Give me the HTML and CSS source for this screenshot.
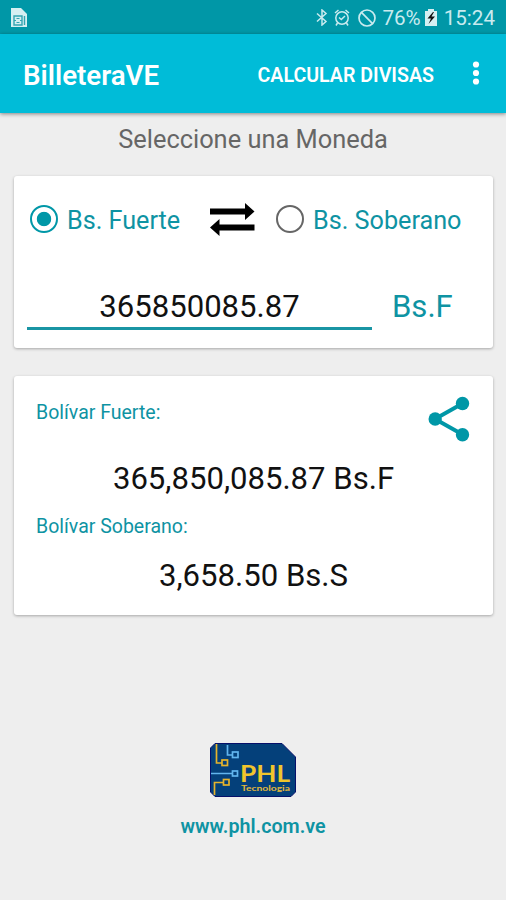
FILE: index.html
```html
<!DOCTYPE html>
<html lang="es">
<head>
  <meta charset="UTF-8">
  <meta name="viewport" content="width=device-width, initial-scale=1.0">
  <title>BilleteraVE</title>
  <link rel="stylesheet" href="styles.css">
</head>
<body>
  <div class="status-bar">
    <svg class="sim-icon" width="17" height="20" viewBox="0 0 17 20">
      <path d="M0 0h10l6 6v13H0z" fill="#d5eff2"/>
      <path d="M3 8h8v9H3zM13.500 8v9" fill="none" stroke="#33a5b2" stroke-width="1.4"/>
      <path d="M5.500 10.500h3M5.500 14.500h3M3 12.500h2M9 12.500h2" stroke="#33a5b2" stroke-width="1.200"/>
    </svg>
    <div class="status-right">
      <svg class="bluetooth" width="12" height="17" viewBox="0 0 12 17">
        <path d="M1 4.5l9 8L6 16V1l4 3.5-9 8" fill="none" stroke="#c9ebef" stroke-width="1.5"/>
      </svg>
      <svg class="alarm" width="16" height="18" viewBox="0 0 16 18">
        <circle cx="8" cy="9" r="6.2" fill="none" stroke="#c9ebef" stroke-width="1.5"/>
        <path d="M1 4l3.5-3M15 4l-3.5-3M3.5 14L2 16.5M12.5 14l1.5 2.5M5 8.5l2.3 2L11 7" fill="none" stroke="#c9ebef" stroke-width="1.5"/>
      </svg>
      <svg class="blocked" width="18" height="18" viewBox="0 0 18 18">
        <path d="M3.2 3.2l11.6 11.6" stroke="#c9ebef" stroke-width="1.7"/>
        <circle cx="9" cy="9" r="8" fill="none" stroke="#c9ebef" stroke-width="1.7"/>
      </svg>
      <span class="percent">76%</span>
      <svg class="battery" width="12" height="17" viewBox="0 0 12 17">
        <path d="M0 2h3V0h6v2h3v15H0z" fill="#d5eff2"/>
        <path d="M8 3L2.5 9.5H6L3.5 15 10 7.5H6.5L9 3z" fill="#111"/>
      </svg>
      <span class="clock">15:24</span>
    </div>
  </div>

  <div class="toolbar">
    <h1>BilleteraVE</h1>
    <button class="divisas-btn">CALCULAR DIVISAS</button>
    <button class="menu-btn" aria-label="Menú">
      <svg width="8" height="24" viewBox="0 0 8 24" fill="#fff">
        <circle cx="4" cy="3.5" r="3.1"/>
        <circle cx="4" cy="12" r="3.1"/>
        <circle cx="4" cy="20.5" r="3.1"/>
      </svg>
    </button>
  </div>

  <p class="subtitle">Seleccione una Moneda</p>

  <div class="card input-card">
    <div class="options">
      <span class="radio checked"></span>
      <span class="label fuerte">Bs. Fuerte</span>
      <svg class="swap" width="45" height="33" viewBox="0 0 45 33">
        <path d="M0 5.500h35V0l9.5 8.500L35 17v-5.500H0zM44.500 21.500H9.500V16L0 24.500 9.500 33v-5.500h35z" fill="#000"/>
      </svg>
      <span class="radio"></span>
      <span class="label">Bs. Soberano</span>
    </div>
    <div class="amount">
      <div class="amount-field">365850085.87</div>
      <span class="unit">Bs.F</span>
    </div>
  </div>

  <div class="card result-card">
    <svg class="share" width="42" height="46" viewBox="0 0 42 46" fill="#0097a7">
      <path d="M34.500 7.500L7 23l27.500 15.500" fill="none" stroke="#0097a7" stroke-width="4"/>
      <circle cx="34.500" cy="7.500" r="6.700"/>
      <circle cx="7.200" cy="23" r="6.700"/>
      <circle cx="34.500" cy="38.800" r="6.700"/>
    </svg>
    <p class="caption">Bolívar Fuerte:</p>
    <p class="value">365,850,085.87 Bs.F</p>
    <p class="caption">Bolívar Soberano:</p>
    <p class="value soberano">3,658.50 Bs.S</p>
  </div>

  <div class="footer">
    <svg class="logo" width="86" height="54" viewBox="0 0 86 54">
      <path d="M5 .5h67L85.500 14v35l-4.500 4.500H5L.5 49V5z" fill="#04407a" stroke="#06106a"/>
      <g fill="none" stroke="#e6b32c" stroke-width="1.700">
        <path d="M6.500 1v19H12M4.500 52V39.500H13"/>
        <rect x="12" y="17" width="5.500" height="5.500"/>
        <rect x="13.500" y="36.500" width="5.500" height="5.500"/>
      </g>
      <g fill="none" stroke="#62b5ee" stroke-width="1.700">
        <path d="M17.500 2v10H23M1 30.500h21"/>
        <rect x="22.500" y="9" width="5.500" height="5.500"/>
        <rect x="22.500" y="28" width="5" height="5"/>
      </g>
      <text class="logo-name" x="30" y="38.500" textLength="50" lengthAdjust="spacingAndGlyphs">PHL</text>
      <text class="logo-sub" x="31" y="47.500" textLength="49" lengthAdjust="spacingAndGlyphs">Tecnologia</text>
    </svg>
    <a class="site">www.phl.com.ve</a>
  </div>
</body>
</html>
```
FILE: styles.css
```css
body {
  margin: 0;
  height: 900px;
  background-color: #eee;
  font-family: Roboto, sans-serif;
  overflow: hidden;
}

h1, p {
  margin: 0;
}

button {
  border: none;
  padding: 0;
  background: none;
  font-family: inherit;
  color: white;
}

svg {
  display: block;
  flex-shrink: 0;
}

.status-bar {
  height: 34px;
  box-sizing: border-box;
  padding: 1px 11px 0;
  display: flex;
  align-items: center;
  justify-content: space-between;
  background-color: #0097a7;
  color: #c9ebef;
  font-size: 20.6px;
}

.status-right {
  display: flex;
  align-items: center;
}

.alarm {
  margin-left: 6px;
}

.blocked {
  margin-left: 8px;
}

.percent {
  margin-left: 6px;
}

.battery {
  margin: 0 7px 0 4px;
}

.toolbar {
  position: relative;
  height: 79px;
  box-sizing: border-box;
  padding: 3px 26px 0 23px;
  display: flex;
  align-items: center;
  background-color: #00bcd8;
  color: white;
  box-shadow: 0 1px 4px rgba(0, 0, 0, 0.45);
}

.toolbar h1 {
  flex: 1;
  font-size: 27.7px;
  font-weight: 600;
}

.divisas-btn {
  font-size: 19.6px;
  font-weight: 600;
}

.menu-btn {
  margin: -4px 0 0 38px;
}

.subtitle {
  height: 63px;
  line-height: 53px;
  text-align: center;
  font-size: 25.4px;
  color: #666;
}

.card {
  margin: 0 13px 0 14px;
  box-sizing: border-box;
  border-radius: 3px;
  background-color: white;
  box-shadow: 0 1px 3px rgba(0, 0, 0, 0.3);
}

.input-card {
  height: 172px;
  padding: 21px 14px 0 16px;
}

.options {
  height: 44px;
  display: flex;
  align-items: center;
  color: #0e93a3;
  font-size: 25.2px;
}

.radio {
  width: 28px;
  height: 28px;
  box-sizing: border-box;
  border: 2.5px solid #666;
  border-radius: 50%;
  flex-shrink: 0;
}

.radio.checked {
  border-color: #0097a7;
  background: radial-gradient(circle, #0097a7 6.8px, transparent 7.6px);
}

.label {
  margin-left: 9px;
  padding-top: 2px;
  white-space: nowrap;
}

.fuerte {
  width: 143px;
}

.swap {
  margin-right: 21px;
}

.amount {
  margin: 20px 0 0 -3px;
  display: flex;
  font-size: 31.1px;
}

.amount-field {
  width: 345px;
  height: 69px;
  box-sizing: border-box;
  border-bottom: 3px solid #1995a4;
  line-height: 91px;
  text-align: center;
  color: #111;
}

.unit {
  margin-left: 20px;
  line-height: 91px;
  color: #0e93a3;
}

.result-card {
  position: relative;
  height: 239px;
  margin-top: 28px;
  padding: 23px 22px 0;
}

.share {
  position: absolute;
  top: 20px;
  right: 23px;
}

.caption {
  height: 26px;
  line-height: 27px;
  font-size: 19.5px;
  color: #0e93a3;
}

.value {
  height: 88px;
  line-height: 108px;
  text-align: center;
  font-size: 31.1px;
  color: #111;
}

.value.soberano {
  height: 72px;
  line-height: 74px;
}

.footer {
  margin-top: 128px;
  display: flex;
  flex-direction: column;
  align-items: center;
}

.logo-name {
  font: bold 23px Lato, sans-serif;
  fill: #f0c52c;
}

.logo-sub {
  font: bold 7.5px Lato, sans-serif;
  fill: #e3b83a;
}

.site {
  margin-top: 18px;
  font-size: 19.7px;
  font-weight: 600;
  color: #0e93a3;
}
```
